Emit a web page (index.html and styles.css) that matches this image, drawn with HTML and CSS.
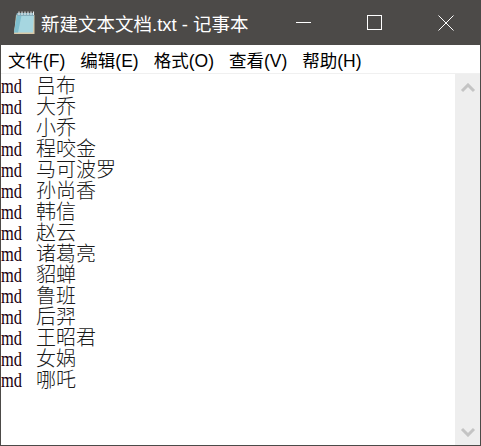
FILE: index.html
```html
<!DOCTYPE html>
<html>
  <head>
    <meta charset="UTF-8" />
    <link rel="stylesheet" href="styles.css">
  </head>
  <body>
    <div class="window">
      <div class="title-bar">
        <svg class="app-icon" xmlns="http://www.w3.org/2000/svg" viewBox="0 0 24 24">
          <path d="M3 4H21.5V23H1z" fill="#d8c9a8"/>
          <path d="M4 2H21L20 21.5H1z" fill="#a6d6e0"/>
          <path d="M4 2H9L5 21.5H1z" fill="#6fb4c4" opacity="0.7"/>
          <path d="M4 2H21V5H3.5z" fill="#86aebb"/>
          <path d="M6 0.5v3.5M9 0.5v3.5M12 0.5v3.5M15 0.5v3.5M18 0.5v3.5M20.5 0.5v3.5" stroke="#e8eef0" stroke-width="1.1"/>
        </svg>
        <div class="title-text">新建文本文档.txt - 记事本</div>
        <div class="window-controls">
          <div class="control">
            <svg class="control-icon" xmlns="http://www.w3.org/2000/svg" viewBox="0 0 16 16">
              <rect x="0" y="7" width="15" height="1" fill="#fff"/>
            </svg>
          </div>
          <div class="control">
            <svg class="control-icon" xmlns="http://www.w3.org/2000/svg" viewBox="0 0 16 16">
              <rect x="0.5" y="0.5" width="14" height="14" fill="none" stroke="#fff"/>
            </svg>
          </div>
          <div class="control">
            <svg class="control-icon" xmlns="http://www.w3.org/2000/svg" viewBox="0 0 16 16">
              <path d="M0.5 0.5L15.5 15.5M15.5 0.5L0.5 15.5" fill="none" stroke="#fff"/>
            </svg>
          </div>
        </div>
      </div>

      <div class="menu-bar">
        <div class="menu-item">文件(F)</div>
        <div class="menu-item">编辑(E)</div>
        <div class="menu-item">格式(O)</div>
        <div class="menu-item">查看(V)</div>
        <div class="menu-item">帮助(H)</div>
      </div>

      <div class="edit-area">
        <div class="text-lines">
          <div class="line"><span class="code">md</span>吕布</div>
          <div class="line"><span class="code">md</span>大乔</div>
          <div class="line"><span class="code">md</span>小乔</div>
          <div class="line"><span class="code">md</span>程咬金</div>
          <div class="line"><span class="code">md</span>马可波罗</div>
          <div class="line"><span class="code">md</span>孙尚香</div>
          <div class="line"><span class="code">md</span>韩信</div>
          <div class="line"><span class="code">md</span>赵云</div>
          <div class="line"><span class="code">md</span>诸葛亮</div>
          <div class="line"><span class="code">md</span>貂蝉</div>
          <div class="line"><span class="code">md</span>鲁班</div>
          <div class="line"><span class="code">md</span>后羿</div>
          <div class="line"><span class="code">md</span>王昭君</div>
          <div class="line"><span class="code">md</span>女娲</div>
          <div class="line"><span class="code">md</span>哪吒</div>
        </div>
        <div class="scrollbar">
          <svg class="arrow" xmlns="http://www.w3.org/2000/svg" viewBox="0 0 16 10">
            <path d="M2 8L8 2L14 8" fill="none" stroke="#c4c4c4" stroke-width="3"/>
          </svg>
          <svg class="arrow" xmlns="http://www.w3.org/2000/svg" viewBox="0 0 16 10">
            <path d="M2 2L8 8L14 2" fill="none" stroke="#c4c4c4" stroke-width="3"/>
          </svg>
        </div>
      </div>
    </div>
  </body>
</html>
```

FILE: styles.css
```css
* {
  margin: 0;
  padding: 0;
  box-sizing: border-box;
}

body {
  width: 481px;
  height: 446px;
  overflow: hidden;
  background-color: #ffffff;
  font-family: "Liberation Sans", "Noto Sans CJK SC", sans-serif;
}

.window {
  height: 100%;
  display: flex;
  flex-direction: column;
  border: 1px solid #4c4a48;
  border-top: none;
}

/* Title bar */
.title-bar {
  height: 45px;
  margin: 0 -1px;
  flex-shrink: 0;
  display: flex;
  align-items: center;
  padding-left: 13px;
  background-color: #4c4a48;
  color: #ffffff;
  font-size: 18.5px;
}

.app-icon {
  width: 24px;
  height: 24px;
  flex-shrink: 0;
}

.title-text {
  margin-left: 4px;
  flex: 1;
}

.window-controls {
  display: flex;
  height: 100%;
}

.control {
  width: 71px;
  display: flex;
  align-items: center;
  justify-content: center;
}

.control-icon {
  width: 16px;
  height: 16px;
}

/* Menu bar */
.menu-bar {
  height: 29px;
  flex-shrink: 0;
  display: flex;
  align-items: center;
  gap: 15px;
  padding-left: 7px;
  border-bottom: 1px solid #f0f0f0;
  color: #000000;
  font-size: 17.5px;
}

/* Text area */
.edit-area {
  flex: 1;
  min-height: 0;
  display: flex;
}

.text-lines {
  flex: 1;
  font-family: "Noto Sans CJK SC", "Liberation Serif", serif;
  font-size: 20px;
  font-weight: 300;
  color: #1a1a1a;
}

.line {
  height: 21px;
  line-height: 21px;
  white-space: nowrap;
}

/* serif latin squeezed to the width of the original bitmap font */
.code {
  display: inline-block;
  width: 35px;
  font-family: "Liberation Serif", serif;
  font-size: 20px;
  color: #200010;
  transform: scaleX(0.82);
  transform-origin: left center;
}

.scrollbar {
  width: 25px;
  flex-shrink: 0;
  display: flex;
  flex-direction: column;
  justify-content: space-between;
  align-items: center;
  padding: 9px 0 8px;
  background-color: #eeeeee;
}

.arrow {
  width: 16px;
  height: 10px;
}
```
